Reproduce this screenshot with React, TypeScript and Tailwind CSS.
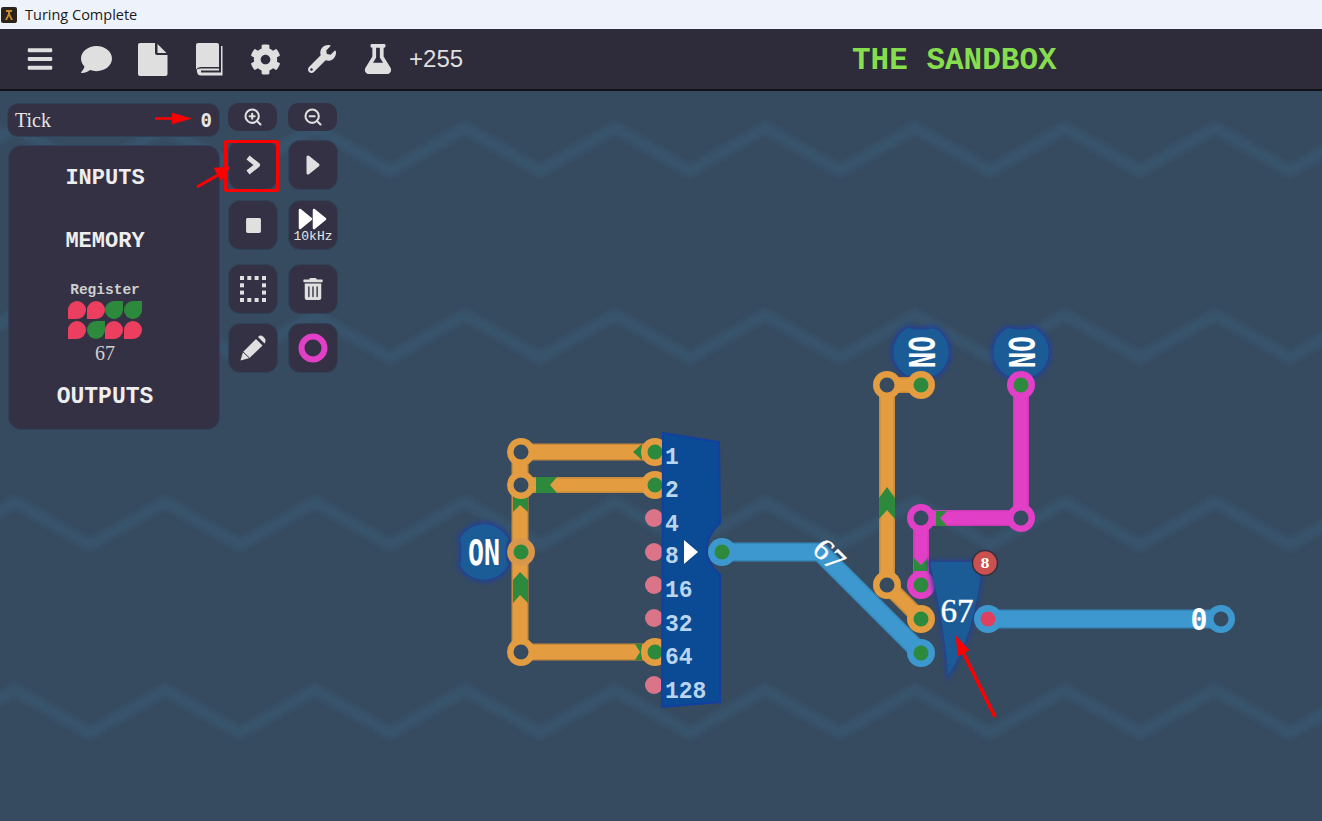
import type { ReactNode } from 'react';
import { FaBars, FaCog, FaComment, FaFlask, FaStop, FaTrashAlt, FaWrench } from 'react-icons/fa';
import { ZoomIn, ZoomOut } from 'lucide-react';

const fileIcon = (
  <svg width="30" height="33" viewBox="0 0 30 33" fill="#dfdfdf">
    <path d="M2 0H17V10Q17 12 19 12H29.500V31Q29.500 33 27.500 33H2Q0 33 0 31V2Q0 0 2 0Z" />
    <path d="M19.500 1L28.500 10H19.500Z" />
  </svg>
);

const bookIcon = (
  <svg width="27" height="33" viewBox="0 0 27 33" fill="#dfdfdf">
    <path d="M2 0H21Q23 0 23 2V24H5Q1.500 24 0 26.500V2Q0 0 2 0Z" />
    <path d="M0.800 27Q1 25.500 5 25.500H23V27.500H5V29.500H25V3H26.500V32.500H5Q0.800 32.500 0.800 27Z" />
  </svg>
);

const toolbarIcons = [
  { key: 'menu', icon: <FaBars size={28} /> },
  { key: 'chat', icon: <FaComment size={31} /> },
  { key: 'file', icon: fileIcon },
  { key: 'book', icon: bookIcon },
  { key: 'settings', icon: <FaCog size={31} /> },
  { key: 'tools', icon: <FaWrench size={28} /> },
  { key: 'lab', icon: <FaFlask size={30} /> },
];

const registerBits = [0, 0, 1, 1, 0, 1, 0, 0];
const splitterLabels = ['1', '2', '4', '8', '16', '32', '64', '128'];
const wavePeaks = [128, 315, 502, 690];
const dotSteps = [0, 7.3, 14.6, 22];
const BLOB = 'M-24 -13A27 27 0 0 1 24 -13Q19 0 24 13A27 27 0 0 1 -24 13Q-21 0 -24 -13Z';

const ORANGE = '#e39c40';
const ORANGE_EDGE = '#c98a3a';
const BLUE = '#3c98cf';
const BLUE_EDGE = '#3587bb';
const MAGENTA = '#e13fc6';
const GREEN = '#2d8a3c';
const HOLE = '#364b60';

function wavePoints(y: number) {
  const pts: string[] = [];
  for (let i = -2; i < 12; i++) {
    pts.push(`${15 + i * 150},${y}`);
    pts.push(`${90 + i * 150},${y + 43}`);
  }
  return pts.join(' ');
}

function SideButton({ children, className = '' }: { children: ReactNode; className?: string }) {
  return (
    <div className={`flex h-[50px] w-[50px] flex-col items-center justify-center rounded-[12px] border border-[#2f4258] bg-[#353144] text-[#e0e0e0] ${className}`}>
      {children}
    </div>
  );
}

function Wire({ d, color, edge, width }: { d: string; color: string; edge: string; width: number }) {
  return (
    <g fill="none" strokeLinejoin="round">
      <path d={d} stroke={edge} strokeWidth={width} />
      <path d={d} stroke={color} strokeWidth={width - 3} />
    </g>
  );
}

function Node({ x, y, color, core }: { x: number; y: number; color: string; core: string }) {
  return (
    <g>
      <circle cx={x} cy={y} r={14} fill={color} />
      <circle cx={x} cy={y} r={7.5} fill={core} />
    </g>
  );
}

function OnBlob({ x, y, rotate }: { x: number; y: number; rotate: number }) {
  return (
    <g transform={`translate(${x} ${y}) rotate(${rotate})`}>
      <path d={BLOB} fill="#22409a" stroke="#22409a" strokeWidth={5} filter="url(#glow)" />
      <path d={BLOB} fill="#1b5c96" />
      <text
        x={0}
        y={12.5}
        textAnchor="middle"
        textLength={32}
        lengthAdjust="spacingAndGlyphs"
        fontFamily="'DejaVu Sans Mono', monospace"
        fontWeight={700}
        fontSize={35}
        fill="#ffffff"
      >
        ON
      </text>
    </g>
  );
}

export default function App() {
  return (
    <div className="flex h-[821px] w-[1322px] flex-col overflow-hidden bg-[#364b60] font-['Liberation_Mono',monospace]">
      {/* window title */}
      <div className="flex h-[29px] shrink-0 items-center gap-[8px] bg-[#eef3fb] pl-[1px]">
        <svg width="16" height="16" viewBox="0 0 16 16">
          <rect width="16" height="16" rx="2" fill="#2a241c" />
          <path d="M5 3h6v2H9v2l3 6h-2L8 9l-2 4H4l3-6V5H5z" fill="#c98a2e" />
        </svg>
        <span className="font-['Open_Sans',sans-serif] text-[14.5px] text-[#1a1a1a]">Turing Complete</span>
      </div>

      {/* top bar */}
      <div className="relative flex h-[62px] shrink-0 items-center border-b-2 border-[#111118] bg-[#2e2b3b] pl-[12px] text-[#dfdfdf]">
        {toolbarIcons.map((item) => (
          <div key={item.key} className="flex w-[56.3px] justify-center">
            {item.icon}
          </div>
        ))}
        <span className="ml-[3px] font-['Liberation_Sans',sans-serif] text-[24px]">+255</span>
        <span className="absolute left-[852px] top-[12px] text-[31px] font-bold leading-[40px] text-[#86dd4e]">THE SANDBOX</span>
      </div>

      {/* canvas */}
      <div className="relative flex-1">
        <svg className="absolute inset-0" width="1322" height="730" viewBox="0 91 1322 730">
          <defs>
            <filter id="glow" x="-30%" y="-30%" width="160%" height="160%">
              <feGaussianBlur stdDeviation="2" />
            </filter>
            <filter id="soft" x="-5%" y="-30%" width="110%" height="160%">
              <feGaussianBlur stdDeviation="2" />
            </filter>
          </defs>

          {wavePeaks.map((y) => (
            <polyline key={y} points={wavePoints(y)} fill="none" stroke="#39526c" strokeWidth={12} filter="url(#soft)" />
          ))}

          {/* ON sources */}
          <OnBlob x={484} y={552} rotate={0} />
          <OnBlob x={921} y={352} rotate={90} />
          <OnBlob x={1021} y={352} rotate={90} />

          {/* orange wires */}
          <Wire d="M521 452H655" color={ORANGE} edge={ORANGE_EDGE} width={17} />
          <Wire d="M521 485H655" color={ORANGE} edge={ORANGE_EDGE} width={16} />
          <Wire d="M520 452V652H655" color={ORANGE} edge={ORANGE_EDGE} width={17} />
          <Wire d="M921 385H887V585L921 619" color={ORANGE} edge={ORANGE_EDGE} width={16} />
          <g fill={GREEN}>
            <path d="M642 444L633 452L642 460Z" />
            <path d="M536 477H557L550 485L557 493H536Z" />
            <path d="M513 492H528V512L520 505L513 512Z" />
            <path d="M513 580L520 572L528 580V603L520 595L513 603Z" />
            <path d="M635 644H642V660H635L640 652Z" />
            <path d="M879 498L887 487L895 498V519L887 510L879 519Z" />
          </g>

          {/* magenta wires */}
          <Wire d="M1021 385V518H921V585" color={MAGENTA} edge="#cf3bb6" width={16} />
          <g fill={GREEN}>
            <path d="M936 511H947L940 518L947 526H936Z" />
            <path d="M914 558L921 565L928 558V571H914Z" />
          </g>

          {/* blue wires */}
          <Wire d="M722 552H820L921 653" color={BLUE} edge={BLUE_EDGE} width={19} />
          <Wire d="M988 619H1221" color={BLUE} edge={BLUE_EDGE} width={19} />

          {/* splitter */}
          <g>
            {[518, 552, 585, 618, 685].map((y) => (
              <circle key={y} cx={654} cy={y} r={9} fill="#dc7489" />
            ))}
            <Node x={655} y={452} color={ORANGE} core={GREEN} />
            <Node x={655} y={485} color={ORANGE} core={GREEN} />
            <Node x={655} y={652} color={ORANGE} core={GREEN} />
            <path
              d="M663 433L719 442L720 523Q706 536 707 550Q707 563 720 575L720 702L662 707Z"
              fill="#0b4a94"
              stroke="#1140a0"
              strokeWidth={2}
            />
            {splitterLabels.map((label, i) => (
              <text
                key={label}
                x={665}
                y={[464, 497, 531, 563, 597, 631, 664, 698][i]}
                fontFamily="'Liberation Mono', monospace"
                fontSize={23}
                fontWeight={700}
                fill="#b9d5ee"
              >
                {label}
              </text>
            ))}
            <path d="M684 540L698 552L684 564Z" fill="#ffffff" />
          </g>

          {/* nodes */}
          <Node x={521} y={452} color={ORANGE} core={HOLE} />
          <Node x={521} y={485} color={ORANGE} core={HOLE} />
          <Node x={521} y={552} color="#d8964a" core={GREEN} />
          <Node x={521} y={652} color={ORANGE} core={HOLE} />
          <Node x={722} y={552} color={BLUE} core={GREEN} />
          <Node x={887} y={385} color={ORANGE} core={HOLE} />
          <Node x={921} y={385} color={ORANGE} core={GREEN} />
          <Node x={887} y={585} color={ORANGE} core={HOLE} />
          <Node x={921} y={619} color={ORANGE} core={GREEN} />
          <Node x={921} y={653} color={BLUE} core={GREEN} />
          <Node x={1021} y={385} color={MAGENTA} core={GREEN} />
          <Node x={1021} y={518} color={MAGENTA} core={HOLE} />
          <Node x={921} y={518} color={MAGENTA} core={HOLE} />
          <Node x={921} y={585} color={MAGENTA} core={GREEN} />

          <text
            transform="translate(829 555) rotate(45)"
            textAnchor="middle"
            y={10}
            fontFamily="'Liberation Serif', serif"
            fontSize={31}
            fill="#ffffff"
            stroke="#ffffff"
            strokeWidth={0.4}
          >
            67
          </text>

          {/* byte display */}
          <path d="M930 562L982 562Q975 636 948 675Q946 636 930 562Z" fill="#22409a" stroke="#22409a" strokeWidth={4} filter="url(#glow)" />
          <path d="M930 562L982 562Q975 636 948 675Q946 636 930 562Z" fill="#1b5c96" />
          <text x={957} y={622} textAnchor="middle" fontFamily="'Liberation Serif', serif" fontSize={33} fill="#ffffff" stroke="#ffffff" strokeWidth={0.4}>67</text>
          <circle cx={985} cy={563} r={12.5} fill="#cb5050" stroke="#2f2f40" strokeWidth={1.5} />
          <text x={985} y={568} textAnchor="middle" fontFamily="'DejaVu Serif', serif" fontWeight={700} fontSize={13} fill="#ffffff">8</text>
          <Node x={988} y={619} color={BLUE} core="#e0405f" />
          <Node x={1221} y={619} color={BLUE} core={HOLE} />
          <text x={1199} y={630} textAnchor="middle" textLength={17} lengthAdjust="spacingAndGlyphs" fontFamily="'DejaVu Sans Mono', monospace" fontSize={31} fontWeight={700} fill="#ffffff">0</text>
        </svg>

        {/* left panels and buttons */}
        <div className="relative flex items-start gap-[8px] pl-[7px] pt-[12px]">
          <div className="flex w-[213px] flex-col gap-[8px]">
            <div className="flex h-[34px] items-center justify-between rounded-[11px] border border-[#2f4258] bg-[#353144] pl-[7px] pr-[7px] text-[#e6e6e6]">
              <span className="font-['Liberation_Serif',serif] text-[20px] leading-[24px]">Tick</span>
              <span className="font-['DejaVu_Sans_Mono',monospace] text-[19px] font-bold leading-[24px]">0</span>
            </div>
            <div className="ml-[1px] flex h-[285px] flex-col items-center rounded-[13px] border border-[#2f4258] bg-[#353144] pr-[18px] text-[#eeeeee]">
              <span className="mt-[19px] text-[22px] font-bold leading-[28px]">INPUTS</span>
              <span className="mt-[35px] text-[22px] font-bold leading-[28px]">MEMORY</span>
              <span className="mt-[26px] text-[14.5px] font-bold leading-[16px] text-[#cfcfcf]">Register</span>
              <div className="mt-[3px] grid grid-cols-4 gap-x-[0.67px] gap-y-[2px]">
                {registerBits.map((bit, i) => (
                  <div
                    key={i}
                    className={
                      bit
                        ? 'h-[18px] w-[18px] rounded-[9px] rounded-tr-none bg-[#2d8a3c]'
                        : 'h-[18px] w-[18px] rounded-[9px] rounded-bl-none bg-[#ec3f5f]'
                    }
                  />
                ))}
              </div>
              <span className="mt-[4px] font-['Liberation_Serif',serif] text-[20px] leading-[20px] text-[#d0d0d0]">67</span>
              <span className="mt-[20px] text-[23px] font-bold leading-[28px]">OUTPUTS</span>
            </div>
          </div>

          <div className="flex w-[110px] flex-col">
            <div className="flex gap-[11px]">
              <div className="flex h-[28px] w-[49px] items-center justify-center rounded-[10px] bg-[#353144] text-[#e0e0e0]">
                <ZoomIn size={20} strokeWidth={2.5} />
              </div>
              <div className="flex h-[28px] w-[49px] items-center justify-center rounded-[10px] bg-[#353144] text-[#e0e0e0]">
                <ZoomOut size={20} strokeWidth={2.5} />
              </div>
            </div>
            <div className="mt-[9px] grid grid-cols-[50px_50px] gap-x-[10px]">
              <SideButton>
                <svg width="18" height="20" viewBox="0 0 18 20">
                  <path d="M4 2.500L13.500 10L4 17.500" fill="none" stroke="#e0e0e0" strokeWidth={5} strokeLinejoin="round" />
                </svg>
              </SideButton>
              <SideButton>
                <svg width="16" height="22" viewBox="0 0 16 22">
                  <path d="M3 3L13 11L3 19Z" fill="#e0e0e0" stroke="#e0e0e0" strokeWidth={3} strokeLinejoin="round" />
                </svg>
              </SideButton>
              <SideButton className="mt-[10px]"><FaStop size={17} /></SideButton>
              <SideButton className="mt-[10px]">
                <svg width="30" height="22" viewBox="0 0 30 22">
                  <path d="M2 2L13 11L2 20Z M16 2L27 11L16 20Z" fill="#ffffff" stroke="#ffffff" strokeWidth={2.5} strokeLinejoin="round" />
                </svg>
                <span className="text-[13px] leading-[13px] text-[#e6e6e6]">10kHz</span>
              </SideButton>
              <SideButton className="mt-[14px]">
                <svg width="26" height="26" viewBox="0 0 26 26" fill="#e0e0e0">
                  {dotSteps.map((p) => (
                    <g key={p}>
                      <rect x={p} y={0} width={4} height={4} />
                      <rect x={p} y={22} width={4} height={4} />
                      <rect x={0} y={p} width={4} height={4} />
                      <rect x={22} y={p} width={4} height={4} />
                    </g>
                  ))}
                </svg>
              </SideButton>
              <SideButton className="mt-[14px]"><FaTrashAlt size={22} /></SideButton>
              <SideButton className="mt-[9px]">
                <svg width="26" height="26" viewBox="0 0 26 26" fill="#e0e0e0">
                  <path d="M0.500 25.500L3 17L16 4L22.500 10.500L9.500 23Z" />
                  <path d="M18 2Q20.500 -0.500 23 1.500L24.500 3Q26.500 5.500 24.500 8.500Z" />
                  <path d="M3 17L9.500 23" stroke="#353144" strokeWidth={1} fill="none" />
                </svg>
              </SideButton>
              <SideButton className="mt-[9px]">
                <svg width="30" height="30" viewBox="0 0 30 30">
                  <circle cx="15" cy="15" r="11.5" fill="none" stroke="#e13fc6" strokeWidth={6} />
                </svg>
              </SideButton>
            </div>
          </div>
        </div>

        {/* annotations on top of the screenshot */}
        <div className="absolute left-[224px] top-[49px] h-[52px] w-[55px] rounded-[2px] border-[3px] border-[#ff0000]" />
        <svg className="pointer-events-none absolute inset-0" width="1322" height="730" viewBox="0 91 1322 730">
          <g fill="#ff0000" stroke="#ff0000">
            <path d="M155 118.500H176" strokeWidth={2.500} />
            <path d="M172 113L191 118.500L172 124Z" strokeWidth={0.500} />
            <path d="M197 187L218 175" strokeWidth={3} />
            <path d="M214 168L230 167L221 181Z" strokeWidth={0.500} />
            <path d="M995 717L962 650" strokeWidth={3.500} />
            <path d="M956 636L969 650L958 656Z" strokeWidth={0.500} />
          </g>
        </svg>
      </div>
    </div>
  );
}
